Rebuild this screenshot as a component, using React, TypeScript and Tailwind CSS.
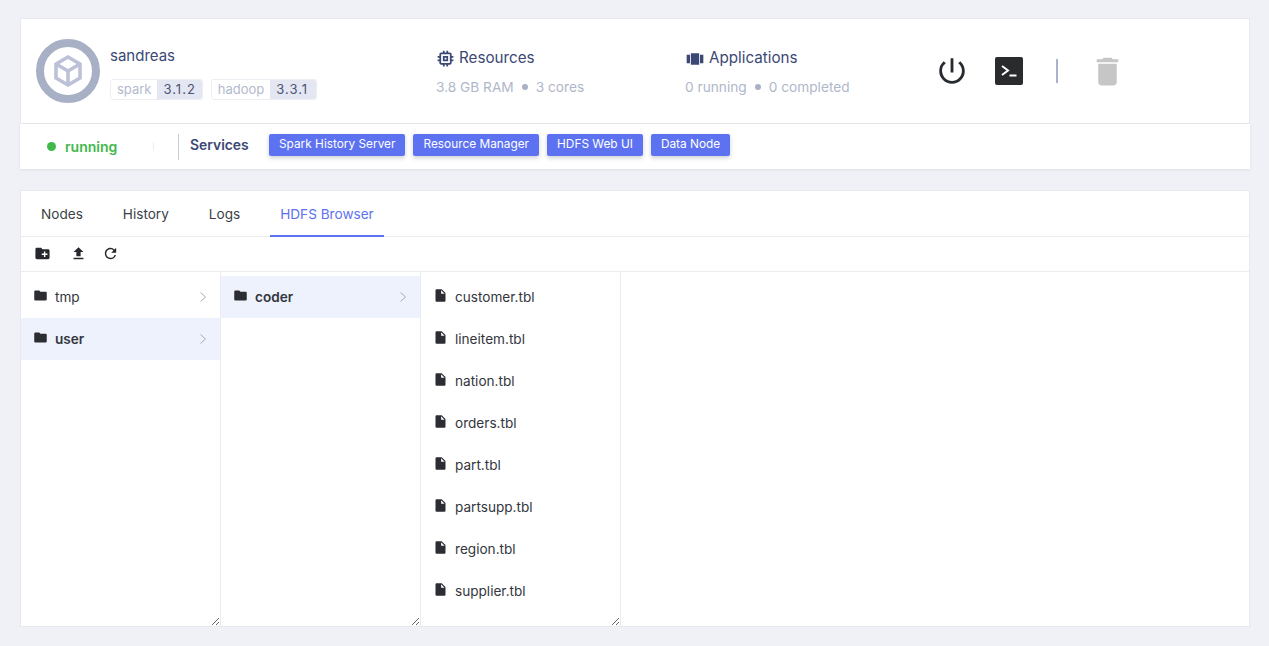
import {
  MdCreateNewFolder,
  MdDelete,
  MdFileUpload,
  MdFolder,
  MdInsertDriveFile,
  MdOutlineMemory,
  MdPowerSettingsNew,
  MdRefresh,
  MdViewCarousel,
} from "react-icons/md";

const services = ["Spark History Server", "Resource Manager", "HDFS Web UI", "Data Node"];
const files = [
  "customer.tbl",
  "lineitem.tbl",
  "nation.tbl",
  "orders.tbl",
  "part.tbl",
  "partsupp.tbl",
  "region.tbl",
  "supplier.tbl",
];

function VersionTag({ name, version, wide }: { name: string; version: string; wide?: boolean }) {
  return (
    <span className="flex h-[21px] items-stretch overflow-hidden rounded-[3px] border border-[#eceef3] text-[13px] leading-[19px]">
      <span className="bg-white px-[6px] text-[#b4bace]">{name}</span>
      <span className={`bg-[#e4e6f1] pl-[6px] tracking-[1px] text-[#4a5578] ${wide ? "pr-[8px]" : "pr-[6px]"}`}>{version}</span>
    </span>
  );
}

function FolderRow({ name, active }: { name: string; active?: boolean }) {
  return (
    <div className={`flex h-[42px] items-center pr-[14px] pl-3 ${active ? "bg-[#eef2fd]" : ""}`}>
      <MdFolder className="mb-[4px] size-[15px] text-[#2b2d33]" />
      <span className={`ml-[7px] flex-1 text-[13.6px] text-[#33363d] ${active ? "font-semibold" : ""}`}>{name}</span>
      <svg viewBox="0 0 6 10" className="h-[10px] w-[6px]">
        <path d="M0.5 0.5L5.5 5L0.5 9.5" fill="none" stroke="#a9abb0" strokeWidth="1" />
      </svg>
    </div>
  );
}

export default function App() {
  return (
    <div className="min-h-[646px] bg-[#f0f1f6] pt-[18px] pr-[19px] pl-5 font-['Inter',sans-serif]">
      {/* cluster card */}
      <div className="flex h-[106px] items-center border border-[#e8e9ef] bg-white pl-[15px]">
        <div className="flex w-[400px] items-center">
          <div className="flex size-[64px] items-center justify-center rounded-full border-[8px] border-[#a8b0c6]">
            <svg viewBox="0 0 28 32" className="h-[32px] w-[28px]" fill="none" stroke="#bdc1d8" strokeWidth="3.6">
              <path d="M14 2L26 9V23L14 30L2 23V9Z" />
              <path d="M2 9L14 16L26 9M14 16V30" />
            </svg>
          </div>
          <div className="ml-[10px] pt-[3px]">
            <div className="text-[15px] text-[#3b4873]">sandreas</div>
            <div className="mt-[12px] flex gap-2">
              <VersionTag name="spark" version="3.1.2" />
              <VersionTag name="hadoop" version="3.3.1" wide />
            </div>
          </div>
        </div>

        <div className="w-[249px] pt-[3px]">
          <div className="flex items-center gap-[3px] text-[15.2px] text-[#3b4873]">
            <MdOutlineMemory className="-ml-px size-[21px]" />
            Resources
          </div>
          <div className="mt-[7px] flex items-center gap-[8px] text-[13.7px] text-[#b0b7ca]">
            3.8 GB RAM
            <span className="size-[6px] rounded-full bg-[#aab1c6]" />
            3 cores
          </div>
        </div>

        <div className="w-[250px] pt-[3px]">
          <div className="flex items-center gap-[4px] text-[15.2px] text-[#3b4873]">
            <MdViewCarousel className="size-[20px]" />
            Applications
          </div>
          <div className="mt-[7px] flex items-center gap-[8px] text-[13.7px] text-[#b0b7ca]">
            0 running
            <span className="size-[6px] rounded-full bg-[#aab1c6]" />
            0 completed
          </div>
        </div>

        <div className="flex items-center">
          <MdPowerSettingsNew className="size-[34px] text-[#272a2e]" />
          <svg viewBox="0 0 28 28" className="ml-[26px] size-[28px]">
            <rect width="28" height="28" rx="2" fill="#2a2b2d" />
            <path d="M7 9l6 4.5L7 18" fill="none" stroke="#fff" strokeWidth="2" />
            <path d="M14.5 18.5h7" stroke="#fff" strokeWidth="2" />
          </svg>
          <div className="ml-[33px] h-[24px] w-[2px] bg-[#a8b3cc]" />
          <MdDelete className="ml-[31px] size-[37px] text-[#c6c6c6]" />
        </div>
      </div>

      {/* services bar */}
      <div className="flex h-[45px] items-center bg-white pl-[27px] shadow-[0_1px_3px_rgba(60,66,87,0.1)]">
        <span className="size-[9px] rounded-full bg-[#41b94a]" />
        <span className="ml-[9px] w-[88px] text-[14px] font-semibold text-[#41b94a]">running</span>
        <span className="h-[9px] w-px bg-[#eeeeee]" />
        <span className="ml-[24px] h-[26px] w-px bg-[#c9ccd2]" />
        <span className="mb-[2px] ml-[11px] w-[79px] text-[13.9px] font-semibold text-[#3b4873]">Services</span>
        <div className="mb-[4px] flex gap-2">
          {services.map((s) => (
            <span
              key={s}
              className="flex h-[22px] items-center rounded-[2px] bg-[#5d72f0] px-[10px] pt-px text-[11.85px] text-white shadow-[0_2px_4px_rgba(60,66,87,0.25)]"
            >
              {s}
            </span>
          ))}
        </div>
      </div>

      {/* browser card */}
      <div className="mt-[21px] border border-[#e8e9ef] bg-white">
        <div className="flex h-[46px] gap-5 border-b border-[#ebecf0] pl-[10px] text-[13.6px] text-[#3b3f47]">
          {["Nodes", "History", "Logs"].map((t) => (
            <div key={t} className="flex items-center px-[10px] pt-[2px]">
              {t}
            </div>
          ))}
          <div className="-mb-px flex items-center border-b-2 border-[#5d72f0] px-[10px] pt-[2px] text-[#5d72f0]">HDFS Browser</div>
        </div>

        <div className="flex h-[35px] items-center border-b border-[#ebecf0] pb-[2px] pl-[13px] text-[#26282d]">
          <MdCreateNewFolder className="size-[17px]" />
          <MdFileUpload className="ml-[19px] size-[17px]" />
          <MdRefresh className="ml-[15px] size-[17px]" />
        </div>

        <div className="flex h-[354px]">
          <div className="h-full w-[200px] resize-x overflow-hidden border-r border-[#ebecf0] pt-1">
            <FolderRow name="tmp" />
            <FolderRow name="user" active />
          </div>
          <div className="h-full w-[200px] resize-x overflow-hidden border-r border-[#ebecf0] pt-1">
            <FolderRow name="coder" active />
          </div>
          <div className="h-full w-[200px] resize-x overflow-hidden border-r border-[#ebecf0] pt-1">
            {files.map((f) => (
              <div key={f} className="flex h-[42px] items-center pl-3">
                <MdInsertDriveFile className="mb-[4px] size-[15px] text-[#2b2d33]" />
                <span className="ml-[7px] text-[13.6px] text-[#33363d]">{f}</span>
              </div>
            ))}
          </div>
        </div>
      </div>
    </div>
  );
}
